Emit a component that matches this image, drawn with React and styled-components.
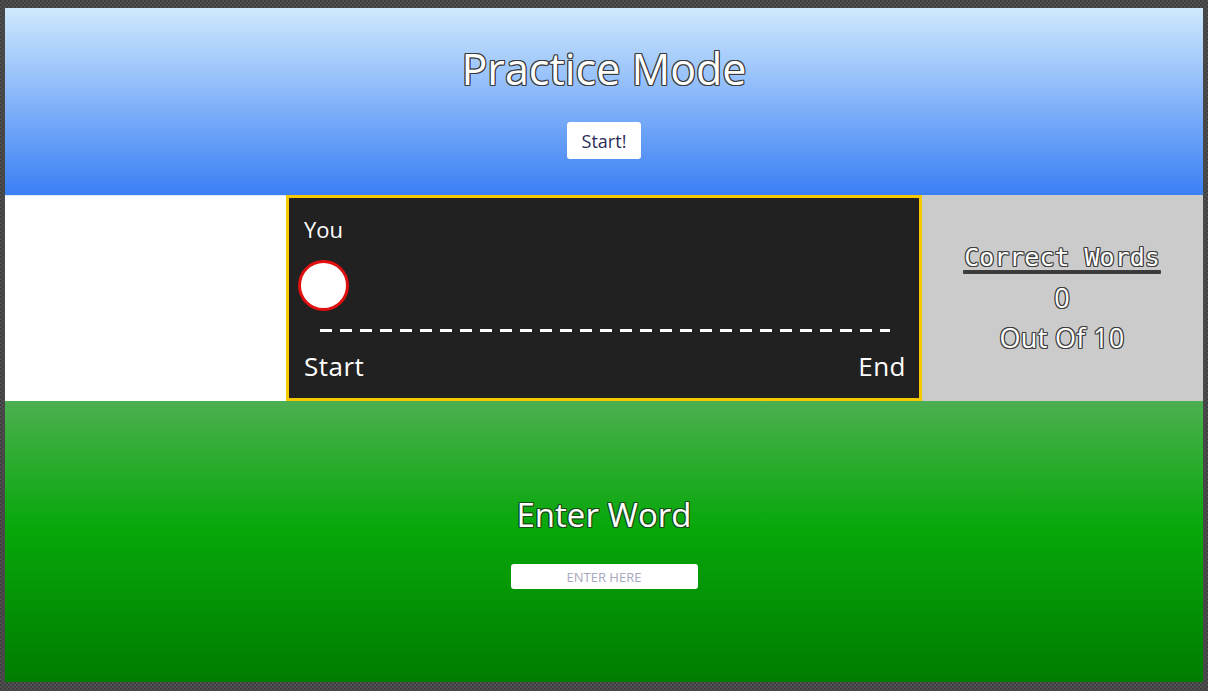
import React from 'react';
import styled, { createGlobalStyle } from 'styled-components';

// 色
const COLORS = {
  FRAME: '#474747',
  SKY_TOP: '#cfe9fd',
  SKY_BOTTOM: '#3a7ff5',
  GRASS_TOP: '#4caf50',
  GRASS_MID: '#07a80a',
  GRASS_BOTTOM: '#007c00',
  TRACK: '#222122',
  TRACK_BORDER: '#f5c800',
  SCORE: '#cbcbcb',
  WHITE: '#ffffff',
  RUNNER_BORDER: '#e01010',
};

const FONT = `"Open Sans", "Noto Sans CJK JP", sans-serif`;
const MONO = `"DejaVu Sans Mono", "Liberation Mono", monospace`;

const GlobalStyle = createGlobalStyle`
  html, body {
    margin: 0;
    padding: 0;
    height: 100%;
  }
  body {
    background-color: ${COLORS.FRAME};
    background-image:
      repeating-conic-gradient(#515151 0% 25%, #3f3f3f 0% 50%);
    background-size: 4px 4px;
    font-family: ${FONT};
  }
`;

const outline = (c) => `
  text-shadow:
    -1px -1px 0 ${c}, 1px -1px 0 ${c}, -1px 1px 0 ${c}, 1px 1px 0 ${c},
    0 -1px 0 ${c}, 0 1px 0 ${c}, -1px 0 0 ${c}, 1px 0 0 ${c};
`;

const PageWrapper = styled.div`
  padding: 8px 5px 9px 5px;
`;

const Stage = styled.div`
  width: 1198px;
  display: flex;
  flex-direction: column;
`;

// ヘッダー
const HeaderWrapper = styled.header`
  height: 187px;
  background: linear-gradient(${COLORS.SKY_TOP}, ${COLORS.SKY_BOTTOM});
  display: flex;
  flex-direction: column;
  align-items: center;
  box-sizing: border-box;
  padding-top: 35px;
`;

const TitleWrapper = styled.h1`
  margin: 0;
  font-family: ${FONT};
  font-weight: 400;
  font-size: 43px;
  line-height: 52px;
  color: ${COLORS.WHITE};
  ${outline('#3a3a3a')}
`;

const StartButton = styled.button`
  margin-top: 27px;
  width: 74px;
  height: 37px;
  border: none;
  border-radius: 3px;
  background: ${COLORS.WHITE};
  font-family: ${FONT};
  font-size: 18px;
  color: #2c2c5a;
  padding: 0;
`;

// コース
const RaceRow = styled.section`
  height: 206px;
  display: grid;
  grid-template-columns: 281px 636px 281px;
`;

const BlankPanel = styled.div`
  background: ${COLORS.WHITE};
  border-top: 1px solid #dfe8f8;
`;

const TrackPanel = styled.div`
  background: ${COLORS.TRACK};
  border: 3px solid ${COLORS.TRACK_BORDER};
  box-sizing: border-box;
  display: flex;
  flex-direction: column;
  padding: 16px 13px 12px 15px;
  color: ${COLORS.WHITE};
  font-family: ${FONT};
`;

const RunnerName = styled.div`
  font-size: 22px;
  line-height: 30px;
`;

const Runner = styled.div`
  margin-top: 16px;
  margin-left: -6px;
  width: 45px;
  height: 45px;
  border-radius: 50%;
  background: ${COLORS.WHITE};
  border: 3px solid ${COLORS.RUNNER_BORDER};
`;

const TrackLine = styled.div`
  margin: 18px 16px 0 16px;
  height: 3px;
  background-image: linear-gradient(to right, ${COLORS.WHITE} 0 12px, transparent 12px 20px);
  background-size: 20px 3px;
  background-repeat: repeat-x;
`;

const TrackLabels = styled.div`
  margin-top: 17px;
  display: flex;
  justify-content: space-between;
  font-size: 26px;
  letter-spacing: 0.5px;
  line-height: 34px;
`;

const ScorePanel = styled.div`
  background: ${COLORS.SCORE};
  display: flex;
  flex-direction: column;
  align-items: center;
  padding-top: 43px;
  padding-right: 1px;
  color: ${COLORS.WHITE};
`;

const ScoreLine = styled.div`
  font-family: ${(props) => (props.mono ? MONO : FONT)};
  font-size: ${(props) => (props.mono ? '25px' : '27px')};
  letter-spacing: ${(props) => (props.mono ? '0' : '0.3px')};
  line-height: 40px;
  text-decoration: ${(props) => (props.underline ? 'underline' : 'none')};
  text-decoration-color: #3a3a3a;
  text-decoration-thickness: 2px;
  text-underline-offset: 5px;
  ${outline('#3d3d3d')}
`;

// 入力
const InputArea = styled.section`
  height: 281px;
  background: linear-gradient(${COLORS.GRASS_TOP}, ${COLORS.GRASS_MID} 45%, ${COLORS.GRASS_BOTTOM});
  display: flex;
  flex-direction: column;
  align-items: center;
  padding-top: 92px;
  box-sizing: border-box;
`;

const InputTitle = styled.h2`
  margin: 0;
  font-family: ${FONT};
  font-weight: 400;
  font-size: 33px;
  line-height: 44px;
  color: ${COLORS.WHITE};
  ${outline('#1a4a1a')}
`;

const WordInput = styled.input`
  margin-top: 27px;
  width: 187px;
  height: 25px;
  box-sizing: border-box;
  border: none;
  border-radius: 3px;
  background: ${COLORS.WHITE};
  text-align: center;
  font-family: ${FONT};
  font-size: 13px;
  outline: none;
  &::placeholder {
    color: #a8a8c0;
  }
`;

export default function App() {
  return (
    <>
      <GlobalStyle />
      <PageWrapper>
        <Stage>
          <HeaderWrapper>
            <TitleWrapper>Practice Mode</TitleWrapper>
            <StartButton>Start!</StartButton>
          </HeaderWrapper>
          <RaceRow>
            <BlankPanel />
            <TrackPanel>
              <RunnerName>You</RunnerName>
              <Runner />
              <TrackLine />
              <TrackLabels>
                <span>Start</span>
                <span>End</span>
              </TrackLabels>
            </TrackPanel>
            <ScorePanel>
              <ScoreLine mono underline>Correct Words</ScoreLine>
              <ScoreLine>0</ScoreLine>
              <ScoreLine>Out Of 10</ScoreLine>
            </ScorePanel>
          </RaceRow>
          <InputArea>
            <InputTitle>Enter Word</InputTitle>
            <WordInput placeholder="ENTER HERE" />
          </InputArea>
        </Stage>
      </PageWrapper>
    </>
  );
}
